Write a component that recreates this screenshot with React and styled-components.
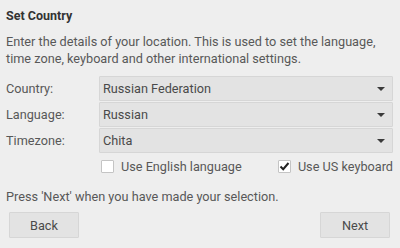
import React from "react";
import styled, { createGlobalStyle } from "styled-components";

const Global = createGlobalStyle`
  html, body { margin: 0; padding: 0; background: #eeeeee; }
  body { font-family: Roboto, "Liberation Sans", sans-serif; color: #4d4d4d; }
`;

const Page = styled.div`
  width: 400px;
  height: 248px;
  box-sizing: border-box;
  padding: 8px 7px 0 6px;
  display: flex;
  flex-direction: column;
`;

const Title = styled.h1`
  margin: 0;
  font-size: 12.5px;
  font-weight: 700;
  line-height: 16px;
  color: #333333;
`;

const Para = styled.p`
  margin: ${(p) => p.$top || 0}px 0 0 0;
  font-size: 12.7px;
  line-height: 17px;
  color: #585858;
`;

const Form = styled.div`
  margin-top: 9px;
  display: grid;
  grid-template-columns: 93px 1fr;
  row-gap: 1px;
  align-items: center;
`;

const Label = styled.div`
  font-size: 12.7px;
  color: #585858;
`;

const Combo = styled.div`
  height: 25px;
  box-sizing: border-box;
  background: #e3e3e3;
  border: 1px solid #d6d6d6;
  border-radius: 1px;
  display: flex;
  align-items: center;
  justify-content: space-between;
  padding: 0 6px 0 3px;
  font-size: 12.7px;
  color: #4a4a4a;
`;

const Arrow = styled.span`
  width: 0;
  height: 0;
  border-left: 4px solid transparent;
  border-right: 4px solid transparent;
  border-top: 4px solid #3a3a3a;
  margin-right: 1px;
`;

const Checks = styled.div`
  margin: 6px 0 0 95px;
  display: flex;
  justify-content: space-between;
`;

const CheckItem = styled.label`
  display: flex;
  align-items: center;
  gap: 7px;
  font-size: 12.7px;
  color: #585858;
`;

const Box = styled.span`
  width: 11px;
  height: 11px;
  background: #ffffff;
  border: 1px solid #c4c4c4;
  border-radius: 1px;
  display: flex;
  align-items: center;
  justify-content: center;
`;

const Buttons = styled.div`
  margin-top: 7px;
  display: flex;
  justify-content: space-between;
  padding: 0 3px 0 3px;
`;

const Button = styled.button`
  width: 70px;
  height: 26px;
  box-sizing: border-box;
  background: #e3e3e3;
  border: 1px solid #d6d6d6;
  border-radius: 1px;
  font-family: Roboto, "Liberation Sans", sans-serif;
  font-size: 12.7px;
  color: #4a4a4a;
  padding: 0;
`;

const Check = () => (
  <svg width="11" height="11" viewBox="0 0 11 11">
    <path d="M1.5 5.5 L4.2 8.2 L9.5 2" fill="none" stroke="#222" strokeWidth="2" />
  </svg>
);

export default function App() {
  return (
    <Page>
      <Global />
      <Title>Set Country</Title>
      <Para $top={9}>
        Enter the details of your location. This is used to set the language,
        time zone, keyboard and other international settings.
      </Para>
      <Form>
        <Label>Country:</Label>
        <Combo>Russian Federation<Arrow /></Combo>
        <Label>Language:</Label>
        <Combo>Russian<Arrow /></Combo>
        <Label>Timezone:</Label>
        <Combo>Chita<Arrow /></Combo>
      </Form>
      <Checks>
        <CheckItem><Box />Use English language</CheckItem>
        <CheckItem><Box><Check /></Box>Use US keyboard</CheckItem>
      </Checks>
      <Para $top={14}>Press 'Next' when you have made your selection.</Para>
      <Buttons>
        <Button>Back</Button>
        <Button>Next</Button>
      </Buttons>
    </Page>
  );
}
